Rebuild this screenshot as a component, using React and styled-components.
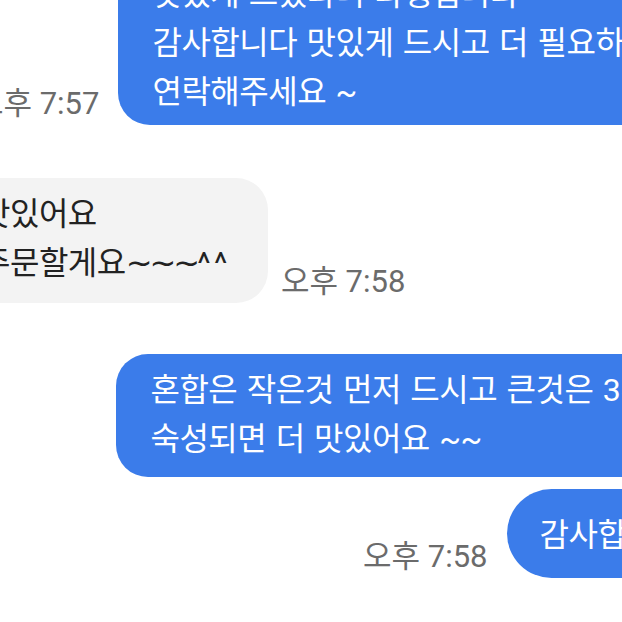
import React from 'react';
import styled, { createGlobalStyle } from 'styled-components';

const Global = createGlobalStyle`
  html, body { margin: 0; padding: 0; background: #ffffff; }
  body { font-family: Roboto, "Noto Sans CJK KR", sans-serif; }
`;

const Screen = styled.div`
  width: 622px;
  height: 622px;
  overflow: hidden;
  background: #ffffff;
`;

const Thread = styled.div`
  display: flex;
  flex-direction: column;
  box-sizing: border-box;
  width: 807px;
  margin: -47px 0 0 -69px;
  padding: 0 16px;
`;

const Row = styled.div`
  display: flex;
  align-items: flex-end;
  justify-content: ${(p) => (p.$out ? 'flex-end' : 'flex-start')};
  gap: ${(p) => (p.$out ? 19 : 13)}px;
  margin-top: ${(p) => p.$gap || 0}px;
`;

const paddings = {
  out: '12px 34px 13px',
  outLow: '17px 34px 8px',
  single: '22px 30px 18px 33px',
  in: '12px 37px 15px 34px',
};

const Bubble = styled.div`
  flex: none;
  white-space: nowrap;
  font-size: 32px;
  letter-spacing: -0.5px;
  word-spacing: 2px;
  line-height: 49px;
  padding: ${(p) => paddings[p.$kind || (p.$out ? 'out' : 'in')]};
  border-radius: ${(p) => (p.$kind === 'single' ? 45 : 32)}px;
  background: ${(p) => (p.$out ? '#3b7cea' : '#f3f3f3')};
  color: ${(p) => (p.$out ? '#ffffff' : '#222222')};
`;

const Waves = styled.span`
  font-family: "DejaVu Sans", sans-serif;
  letter-spacing: -3px;
`;

const Carets = styled.span`
  letter-spacing: 3.5px;
`;

const Time = styled.span`
  flex: none;
  font-size: 31px;
  line-height: 32px;
  color: #6b6b6b;
  margin-bottom: 5px;
  white-space: nowrap;
`;

export default function App() {
  return (
    <>
      <Global />
      <Screen>
        <Thread>
          <Row $out>
            <Time>오후 7:57</Time>
            <Bubble $out $kind="outLow">
              맛있게 드셨다니 다행입니다
              <br />
              감사합니다 맛있게 드시고 더 필요하시면,
              <br />
              연락해주세요 ~
            </Bubble>
          </Row>
          <Row $gap={53}>
            <Bubble>
              맛있어요
              <br />
              주문할게요<Waves>~~~</Waves><Carets>^^</Carets>
            </Bubble>
            <Time>오후 7:58</Time>
          </Row>
          <Row $out $gap={51}>
            <Bubble $out>
              혼합은 작은것 먼저 드시고 큰것은 3~4일
              <br />
              숙성되면 더 맛있어요 ~~
            </Bubble>
          </Row>
          <Row $out $gap={12}>
            <Time>오후 7:58</Time>
            <Bubble $out $kind="single">
              감사합니다!
            </Bubble>
          </Row>
        </Thread>
      </Screen>
    </>
  );
}
